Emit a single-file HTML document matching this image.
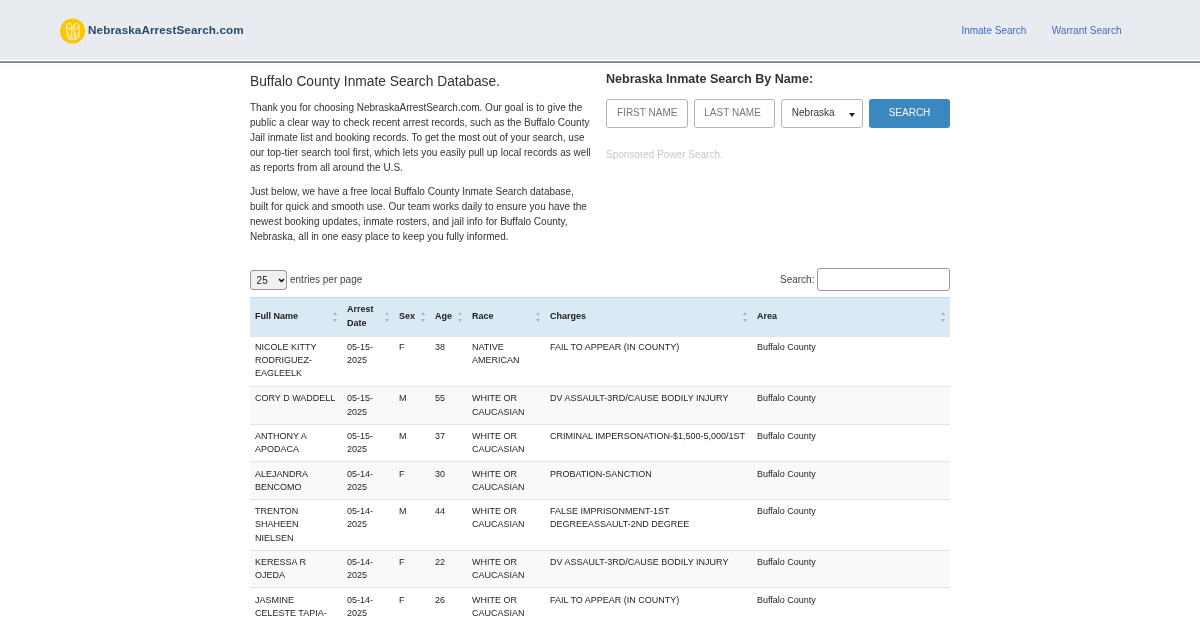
<!DOCTYPE html>
<html>
<head>
<meta charset="utf-8">
<style>
*{box-sizing:border-box;margin:0;padding:0}
html,body{width:1200px;height:620px;overflow:hidden;background:#fff}
body{font-family:"Liberation Sans",sans-serif;color:#333;position:relative}
.hdr{position:absolute;left:0;top:0;width:1200px;height:60px;background:#e8ecf0}
.hline{position:absolute;left:0;top:61px;width:1200px;height:2px;background:linear-gradient(#9c9c9c 0,#9c9c9c 50%,#828282 50%,#828282 100%)}
.hline2{position:absolute;left:0;top:64px;width:1200px;height:1px;background:#fafafa}
.logo{position:absolute;left:59.8px;top:18px;width:26px;height:26px}
.brand{position:absolute;left:88px;top:21.9px;font-weight:bold;font-size:11.7px;letter-spacing:0.1px;color:#2b4a6a;line-height:16px;white-space:nowrap}
.nav{position:absolute;top:24.4px;font-size:10px;line-height:14px;color:#4467c8;white-space:nowrap}
.title{position:absolute;left:250px;top:72.8px;font-size:13.77px;line-height:18px;white-space:nowrap;color:#333}
.para{position:absolute;left:250px;width:343px;font-size:10px;line-height:15px;color:#333}
.p1{top:100px}
.p2{top:184px}
.rtitle{position:absolute;left:606px;top:70.7px;font-weight:bold;font-size:12.56px;line-height:16px;color:#333;white-space:nowrap}
.inp{position:absolute;top:98.5px;height:29px;border:1px solid #b3b3b3;border-radius:3px;background:#fff;font-size:10px;line-height:27px;color:#777;white-space:nowrap}
.btn{position:absolute;left:869px;top:99px;width:81px;height:28.5px;border-radius:3px;background:#3b87c0;color:#eef6ff;font-size:10px;line-height:28px;text-align:center}
.spons{position:absolute;left:606px;top:148px;font-size:10px;line-height:14px;color:#c8c8c8;white-space:nowrap}
.len{position:absolute;left:250px;top:270px;width:37px;height:20px;border:1px solid #999;border-radius:3px;background:#f0f0f0;font-size:10px;line-height:19.6px;padding-left:5.6px;color:#222}
.lenlbl{position:absolute;left:290px;top:272.7px;font-size:10px;line-height:14px;color:#444}
.slbl{position:absolute;left:780px;top:273px;font-size:10px;line-height:14px;color:#444}
.sbox{position:absolute;left:817px;top:268px;width:133px;height:23px;border:1px solid #999;border-radius:3px;background:#fff}
table{position:absolute;left:250px;top:297px;width:700px;border-collapse:collapse;table-layout:fixed;font-size:9px;line-height:13.33px;color:#242424}
th{background:#d9eaf5;font-weight:bold;text-align:left;padding:5px 5px;height:38.5px;position:relative;border-top:1px solid #c9d9e4;color:#1c1c1c}
td{padding:5.1px 5px 4.8px 5px;vertical-align:top;border-top:1px solid #e4e4e4}
tr.s td{background:#f9f9f9}
tr.f td{padding-top:4.3px;padding-bottom:5.6px}
.sort{position:absolute;right:5px;top:13.7px;width:4px;height:11px}
.sort:before{content:"";position:absolute;left:0;top:0;border-left:2px solid transparent;border-right:2px solid transparent;border-bottom:3.4px solid #a9b8c1}
.sort:after{content:"";position:absolute;left:0;top:7.3px;border-left:2px solid transparent;border-right:2px solid transparent;border-top:3.4px solid #a9b8c1}
.caret{position:absolute;left:67.2px;top:13px;width:0;height:0;border-left:3.4px solid transparent;border-right:3.4px solid transparent;border-top:4.2px solid #222}
.chev{position:absolute;left:26.6px;top:7.2px}
#wrap{position:absolute;left:0;top:0;width:1200px;height:620px;will-change:transform;overflow:hidden}
</style>
</head>
<body><div id="wrap">
<div class="hdr"></div>
<div class="hline"></div><div class="hline2"></div>
<svg class="logo" width="26" height="26" viewBox="0 0 26 26"><circle cx="12.5" cy="13" r="12.6" fill="#f9c70a"/><g fill="none" stroke="#fff8d8" stroke-width="1" stroke-linejoin="round" stroke-linecap="round"><g id="hd"><path d="M7.3 18.6 L7.2 14 C6.5 11.5 6 8.8 6.7 7 C7.4 5.3 10.8 5.1 11.5 6.8 C12.1 8.6 12 11.5 11.8 14 L11.8 18.6 Z"/><path d="M7.6 8.4 L9.4 12 L11.2 8.4" stroke-width="0.75"/><path d="M8.6 14.5 L8.6 18 M10.4 14.5 L10.4 18" stroke-width="0.55" stroke="#fde58a"/></g><use href="#hd" transform="translate(7.2 0)"/><path d="M8.6 20.9 L16.8 20.9" stroke-width="1.3"/></g></svg>
<div class="brand">NebraskaArrestSearch.com</div>
<div class="nav" style="left:961.4px">Inmate Search</div>
<div class="nav" style="left:1051.8px">Warrant Search</div>

<div class="title">Buffalo County Inmate Search Database.</div>
<div class="para p1">Thank you for choosing NebraskaArrestSearch.com. Our goal is to give the public a clear way to check recent arrest records, such as the Buffalo County Jail inmate list and booking records. To get the most out of your search, use our top-tier search tool first, which lets you easily pull up local records as well as reports from all around the U.S.</div>
<div class="para p2">Just below, we have a free local Buffalo County Inmate Search database, built for quick and smooth use. Our team works daily to ensure you have the newest booking updates, inmate rosters, and jail info for Buffalo County, Nebraska, all in one easy place to keep you fully informed.</div>

<div class="rtitle">Nebraska Inmate Search By Name:</div>
<div class="inp" style="left:606px;width:81.5px;padding-left:10px;line-height:26px">FIRST NAME</div>
<div class="inp" style="left:694px;width:81px;padding-left:9.3px;line-height:26px">LAST NAME</div>
<div class="inp" style="left:781px;width:81.5px;padding-left:9.8px;line-height:26px;color:#333">Nebraska<span class="caret"></span></div>
<div class="btn">SEARCH</div>
<div class="spons">Sponsored Power Search.</div>

<div class="len">25<svg class="chev" width="7" height="5" viewBox="0 0 7 5"><path d="M1 1.1 L3.5 3.4 L6 1.1" fill="none" stroke="#111" stroke-width="1.45"/></svg></div>
<div class="lenlbl">entries per page</div>
<div class="slbl">Search:</div>
<div class="sbox"></div>

<table>
<colgroup><col style="width:92px"><col style="width:52px"><col style="width:36px"><col style="width:37px"><col style="width:78px"><col style="width:207px"><col style="width:198px"></colgroup>
<thead><tr>
<th>Full Name<span class="sort"></span></th>
<th>Arrest Date<span class="sort"></span></th>
<th>Sex<span class="sort"></span></th>
<th>Age<span class="sort"></span></th>
<th>Race<span class="sort"></span></th>
<th>Charges<span class="sort"></span></th>
<th>Area<span class="sort"></span></th>
</tr></thead>
<tbody>
<tr class="f"><td>NICOLE KITTY RODRIGUEZ-EAGLEELK</td><td>05-15-2025</td><td>F</td><td>38</td><td>NATIVE AMERICAN</td><td>FAIL TO APPEAR (IN COUNTY)</td><td>Buffalo County</td></tr>
<tr class="s"><td>CORY D WADDELL</td><td>05-15-2025</td><td>M</td><td>55</td><td>WHITE OR CAUCASIAN</td><td>DV ASSAULT-3RD/CAUSE BODILY INJURY</td><td>Buffalo County</td></tr>
<tr><td>ANTHONY A APODACA</td><td>05-15-2025</td><td>M</td><td>37</td><td>WHITE OR CAUCASIAN</td><td>CRIMINAL IMPERSONATION-$1,500-5,000/1ST</td><td>Buffalo County</td></tr>
<tr class="s"><td>ALEJANDRA BENCOMO</td><td>05-14-2025</td><td>F</td><td>30</td><td>WHITE OR CAUCASIAN</td><td>PROBATION-SANCTION</td><td>Buffalo County</td></tr>
<tr><td>TRENTON SHAHEEN NIELSEN</td><td>05-14-2025</td><td>M</td><td>44</td><td>WHITE OR CAUCASIAN</td><td>FALSE IMPRISONMENT-1ST DEGREEASSAULT-2ND DEGREE</td><td>Buffalo County</td></tr>
<tr class="s"><td>KERESSA R OJEDA</td><td>05-14-2025</td><td>F</td><td>22</td><td>WHITE OR CAUCASIAN</td><td>DV ASSAULT-3RD/CAUSE BODILY INJURY</td><td>Buffalo County</td></tr>
<tr><td>JASMINE CELESTE TAPIA-MARTINEZ</td><td>05-14-2025</td><td>F</td><td>26</td><td>WHITE OR CAUCASIAN</td><td>FAIL TO APPEAR (IN COUNTY)</td><td>Buffalo County</td></tr>
</tbody>
</table>
</div></body>
</html>
